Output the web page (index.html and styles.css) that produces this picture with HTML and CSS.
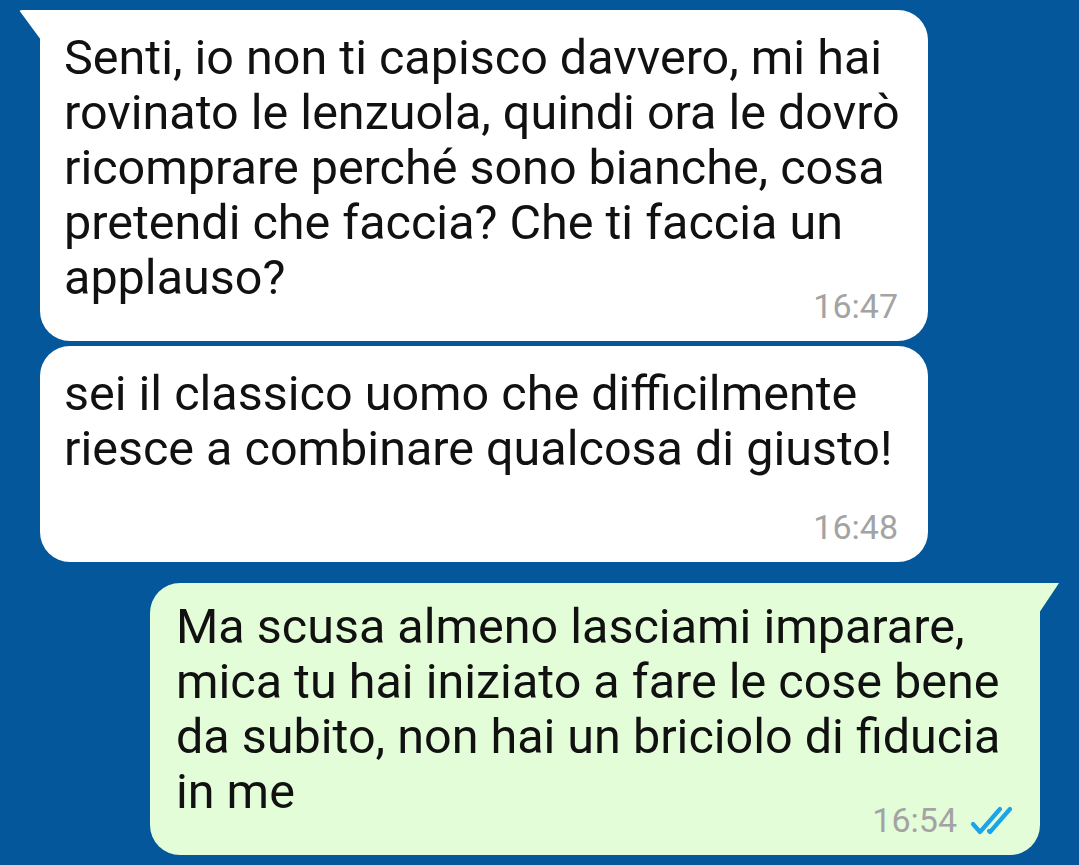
FILE: index.html
```html
<!DOCTYPE html>
<html lang="it">
<head>
  <meta charset="UTF-8" />
  <title>Chat</title>
  <link rel="stylesheet" href="styles.css">
</head>
<body>
  <div class="chat">
    <div class="msg in first">
      <div class="text">Senti, io non ti capisco davvero, mi hai rovinato le lenzuola, quindi ora le dovrò ricomprare perché sono bianche, cosa pretendi che faccia? Che ti faccia un applauso?</div>
      <div class="meta"><span class="time">16:47</span></div>
    </div>
    <div class="msg in next">
      <div class="text">sei il classico uomo che difficilmente riesce a combinare qualcosa di giusto!<br>&nbsp;</div>
      <div class="meta"><span class="time">16:48</span></div>
    </div>
    <div class="msg out first">
      <div class="text">Ma scusa almeno lasciami imparare, mica tu hai iniziato a fare le cose bene da subito, non hai un briciolo di fiducia in me</div>
      <div class="meta">
        <span class="time">16:54</span>
        <svg class="ticks" width="44" height="30" viewBox="0 0 44 30">
          <path d="M4 18 L11 26 L31 3" fill="none" stroke="#1ba5e8" stroke-width="4.2" stroke-linecap="round" stroke-linejoin="round"/>
          <path d="M20 25 L21 26 L41 3" fill="none" stroke="#1ba5e8" stroke-width="4.2" stroke-linecap="round" stroke-linejoin="round"/>
        </svg>
      </div>
    </div>
  </div>
</body>
</html>
```

FILE: styles.css
```css
html, body {
  margin: 0;
  padding: 0;
  height: 100%;
  overflow: hidden;
  background: #04579b;
  font-family: Roboto, "Noto Sans", sans-serif;
}
.chat {
  display: flex;
  flex-direction: column;
  padding-top: 10px;
}
.msg {
  position: relative;
  background: #fff;
  border-radius: 30px;
  color: #111;
  box-sizing: border-box;
}
.msg.in {
  margin-left: 40px;
  width: 888px;
  padding: 20px 16px 20px 24px;
}
.msg.in .meta {
  padding-right: 14px;
}
.msg.in.first {
  border-top-left-radius: 0;
}
.msg.in.next {
  margin-top: 5px;
}
.msg.in.next .meta {
  margin-top: -19px;
}
.msg.in.first::before {
  content: "";
  position: absolute;
  left: -21px;
  top: 0;
  width: 22px;
  height: 30px;
  background: #fff;
  clip-path: polygon(0 0, 100% 0, 100% 100%, 8% 8%);
  border-top-left-radius: 3px;
}
.msg.out {
  margin-left: 150px;
  margin-top: 21px;
  width: 890px;
  background: #e4fdd9;
  padding: 16px 27px 20px 26px;
  border-top-right-radius: 0;
}
.msg.out::before {
  content: "";
  position: absolute;
  right: -19px;
  top: 0;
  width: 20px;
  height: 30px;
  background: #e4fdd9;
  clip-path: polygon(0 0, 100% 0, 92% 8%, 0 100%);
}
.text {
  font-size: 48.5px;
  line-height: 55px;
}
.meta {
  display: flex;
  justify-content: flex-end;
  align-items: center;
  gap: 12px;
  margin-top: -14px;
  height: 30px;
}
.time {
  font-size: 34px;
  line-height: 30px;
  color: #a3a3a3;
}
.ticks {
  display: block;
  margin-top: 2px;
}
```
